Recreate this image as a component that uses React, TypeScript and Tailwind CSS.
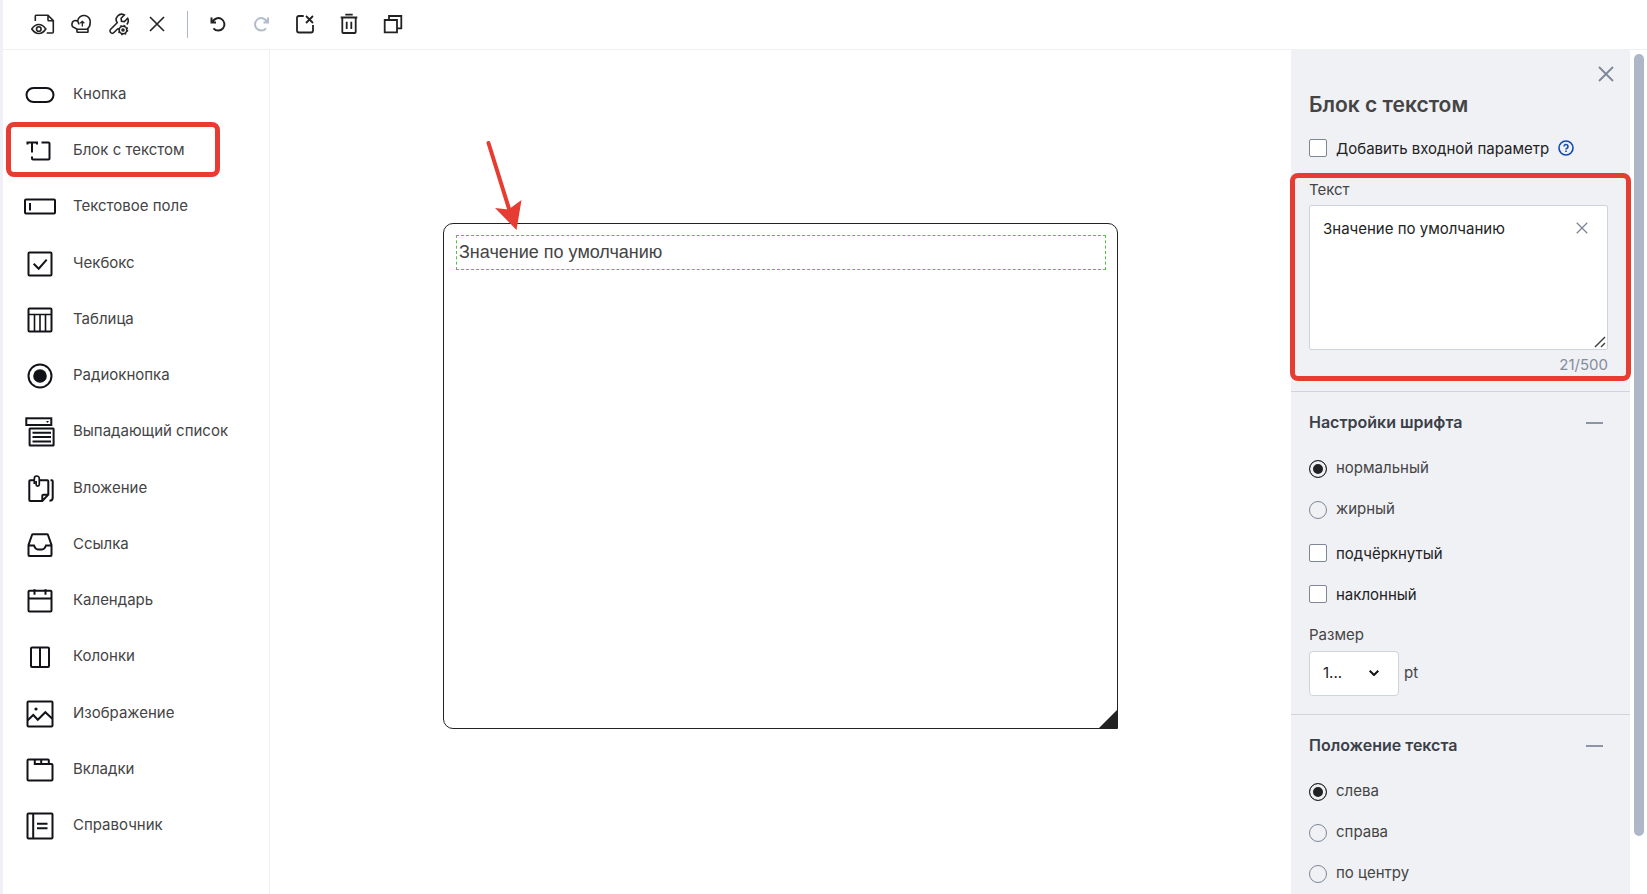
import { useState, type ReactNode } from 'react';

interface PaletteItem {
  label: string;
  icon: ReactNode;
  selected?: boolean;
}

const paletteGroups: PaletteItem[][] = [
  [
    { label: 'Кнопка', icon: <rect x="2.5" y="9" width="27" height="14" rx="7" /> },
    {
      label: 'Блок с текстом',
      selected: true,
      icon: <path d="M3.500 9.500V7.500h9.500v2M8 7.500v10M8 21.500v2q0 1 1 1h15.500q1 0 1-1v-15q0-1-1-1H17.500" />,
    },
    {
      label: 'Текстовое поле',
      icon: (
        <>
          <rect x="1" y="8.5" width="30" height="14" rx="1" />
          <path d="M6 12v7.500" />
        </>
      ),
    },
  ],
  [
    {
      label: 'Чекбокс',
      icon: (
        <>
          <rect x="4.5" y="4.5" width="23" height="23" rx="1" />
          <path d="m9.700 15.700 5 5 8-9" />
        </>
      ),
    },
    {
      label: 'Таблица',
      icon: (
        <>
          <rect x="4.5" y="4.5" width="23" height="23" rx="1" />
          <path d="M4.5 10.5h23M10.5 10.5v17M16 10.5v17M21.5 10.5v17" strokeWidth="1.6" />
        </>
      ),
    },
    {
      label: 'Радиокнопка',
      icon: (
        <>
          <circle cx="16" cy="16" r="11.5" />
          <circle cx="16" cy="16" r="6.8" fill="currentColor" stroke="none" />
        </>
      ),
    },
    {
      label: 'Выпадающий список',
      icon: (
        <>
          <rect x="2.3" y="2.3" width="25" height="6.7" />
          <path d="M22 5h3l-1.5 2z" fill="currentColor" stroke="none" />
          <rect x="5.6" y="12.6" width="24" height="17" rx=".5" />
          <path d="M8.500 16.800h18.500M8.500 21.100h18.500M8.500 25.400h18.500" />
        </>
      ),
    },
  ],
  [
    {
      label: 'Вложение',
      icon: (
        <>
          <path d="M10 7.300H6.300q-1 0-1 1V27q0 1 1 1h12l6-6.300V8.300q0-1-1-1H15.500M18.300 28v-5.300q0-1 1-1h5.400" />
          <path d="M10.300 11V5.500a2.500 2.500 0 0 1 5 0v6a1.600 1.600 0 0 1-3.200 0V8" strokeWidth="1.7" />
          <path d="M26.500 7.300h1.200q1 0 1 1V25q0 2.500-3.200 2.800" />
        </>
      ),
    },
    {
      label: 'Ссылка',
      icon: (
        <path d="M9 5.300h14q.7 0 1 .7l3.500 10v10q0 1-1 1h-21q-1 0-1-1V16L8 6q.3-.7 1-.7ZM4.500 16.500H10q1.500 4 4 4h4q2.500 0 4-4h5.500" />
      ),
    },
    {
      label: 'Календарь',
      icon: (
        <>
          <rect x="4.5" y="5.7" width="23" height="20.8" rx="1" />
          <path d="M4.5 13.5h23M10.5 4.200v5.500M21.500 4.200v5.500" />
        </>
      ),
    },
    {
      label: 'Колонки',
      icon: (
        <>
          <rect x="7" y="6.5" width="18" height="19.5" rx="1" />
          <path d="M16 6.500v19.500" />
        </>
      ),
    },
  ],
  [
    {
      label: 'Изображение',
      icon: (
        <>
          <rect x="3.5" y="3.5" width="25" height="25" rx="1" />
          <circle cx="12" cy="11" r="1.6" fill="currentColor" stroke="none" />
          <path d="M3.700 22.300 9.300 17l4.500 4.700 7.500-7.500 7 6.500" />
        </>
      ),
    },
    {
      label: 'Вкладки',
      icon: (
        <>
          <path d="M4.500 5.500H24q.8 0 .8.800v3.700h2.700q1 0 1 1v14.500q0 1-1 1h-23q-1 0-1-1v-19q0-1 1-1Z" />
          <path d="M10.800 5.500V10h14M17.200 5.500V10" />
        </>
      ),
    },
    {
      label: 'Справочник',
      icon: (
        <>
          <rect x="3.5" y="3.5" width="25" height="25" rx="1" />
          <path d="M9.200 3.500v25M13 13.700h10.500M13 18.200h10.500" />
        </>
      ),
    },
  ],
];

const fileTools = [
  {
    label: 'Предпросмотр',
    icon: (
      <>
        <path d="M4.300 9V4q0-.7.700-.7h12l5.300 5.400V20q0 1-1 1h-5.600M17 3.300V8q0 .7.700.7h4.600" />
        <path d="M.8 17q3-4.500 7-4.500t7 4.500q-3 4.500-7 4.500T.8 17Z" />
        <circle cx="7.8" cy="17" r="2.3" />
      </>
    ),
  },
  {
    label: 'Опубликовать',
    icon: (
      <>
        <path d="M9.800 12.500A3.800 3.800 0 0 0 7 8.600a3.700 3.700 0 0 0-1.500 7.200q1.800.8 2.700 2M8.700 8.800a6.300 6.300 0 0 1 12.500 2q0 4-3 6.400" />
        <rect x="8" y="17.3" width="11" height="3" rx=".5" />
        <path d="M13.300 14.500V9.700M11.300 11.300l2-2 2 2" strokeWidth="1.3" />
      </>
    ),
  },
  {
    label: 'Настройки',
    icon: (
      <>
        <path d="M11 16.500l-4 4a2.300 2.300 0 0 1-3.300-3.300l6.500-6.500a5.400 5.400 0 0 1 7.200-7.700l-3.300 3.300.4 2.900 2.900.4 3.300-3.300q1.600 3.300-.9 6.200" />
        <circle cx="16" cy="18" r="3.8" />
        <circle cx="16" cy="18" r="1" />
        <circle cx="16" cy="18" r="4.7" strokeWidth="1.2" strokeDasharray="1.7 2" />
      </>
    ),
  },
  { label: 'Закрыть редактор', icon: <path d="m5 5 14 14M19 5 5 19" /> },
];

const editTools = [
  { label: 'Отменить', icon: <path d="M6.500 5.500v5H11M7.500 10A6.200 6.200 0 1 1 8.500 16.300" strokeWidth="2" /> },
  {
    label: 'Повторить',
    disabled: true,
    icon: <path d="M19 5.500v5h-4.500M18 10A6.200 6.200 0 1 0 17 16.300" strokeWidth="2" />,
  },
  {
    label: 'Очистить',
    icon: <path d="M10.700 4H6Q4 4 4 6v12.500q0 2 2 2h12q2 0 2-2V13M13 4l7 7M20 4l-7 7" strokeWidth="1.8" />,
  },
  {
    label: 'Удалить',
    icon: (
      <path d="M3.700 5.500h16.600M8.300 2.700h7.400M5.300 5.500V20q0 1 1 1h11.400q1 0 1-1V5.500M9.700 9.700V17M14.300 9.700V17" strokeWidth="1.8" />
    ),
  },
  { label: 'Дублировать', icon: <path d="M3.700 8H16v12.300H3.700ZM8 8V4h12.300v12.300H16" strokeWidth="1.8" /> },
];

function CrossIcon({ className }: { className: string }) {
  return (
    <svg viewBox="0 0 16 16" className={className} fill="none" stroke="currentColor" strokeWidth="1.8" aria-hidden="true">
      <path d="m1 1 14 14M15 1 1 15" />
    </svg>
  );
}

function ToolButton({ label, icon, disabled, className }: { label: string; icon: ReactNode; disabled?: boolean; className: string }) {
  return (
    <button type="button" aria-label={label} disabled={disabled} className={className}>
      <svg viewBox="0 0 24 24" className="size-6" fill="none" stroke="currentColor" strokeWidth="1.6" aria-hidden="true">
        {icon}
      </svg>
    </button>
  );
}

function Toolbar() {
  return (
    <header className="flex h-[50px] shrink-0 items-center border-b border-[#eff0f2] pb-px pl-[21px] text-[#222]">
      {fileTools.map((tool) => (
        <ToolButton key={tool.label} {...tool} className="flex w-[38px] justify-center" />
      ))}
      <div className="mr-[7px] ml-[11px] h-[27px] w-px bg-[#aeb7c7]" />
      {editTools.map((tool) => (
        <ToolButton key={tool.label} {...tool} className="flex w-11 justify-center disabled:text-[#b3bccb]" />
      ))}
    </header>
  );
}

function Palette() {
  return (
    <nav className="flex w-[267px] shrink-0 flex-col gap-px border-r border-[#eff0f2] pt-[17px]">
      {paletteGroups.map((group, index) => (
        <div key={index}>
          {group.map((item) => (
            <button key={item.label} type="button" className="relative flex h-14 w-full items-center gap-[17px] pl-[21px] text-left">
              <svg viewBox="0 0 32 32" className="size-8 text-[#121318]" fill="none" stroke="currentColor" strokeWidth="2" aria-hidden="true">
                {item.icon}
              </svg>
              <span className="pb-[2px]">{item.label}</span>
              {item.selected && (
                <span className="absolute -top-px left-[3px] h-[55px] w-[214px] rounded-lg border-5 border-[#e63c32]" />
              )}
            </button>
          ))}
        </div>
      ))}
    </nav>
  );
}

function Canvas({ text }: { text: string }) {
  return (
    <main className="flex min-w-0 flex-1 items-start justify-center pt-[173px]">
      <div className="relative h-[506px] w-[675px] rounded-[10px] rounded-br-none border border-[#222] py-[11px] pr-[11px] pl-3">
        <p className="h-[35px] border border-dashed border-[#52c041] px-[2px] font-[Liberation_Sans,sans-serif] text-lg leading-8">
          {text}
        </p>
        {/* Resize corner */}
        <svg viewBox="0 0 18 18" className="absolute right-0 bottom-0 size-[18px]" aria-hidden="true">
          <path d="M18 0v18H0z" fill="#222" />
        </svg>
        {/* Pointer to the edited block */}
        <svg viewBox="0 0 48 100" className="absolute -top-[84px] left-9 h-[100px] w-12" aria-hidden="true">
          <path d="M8.500 3 30 72" stroke="#e63c32" strokeWidth="4" strokeLinecap="round" />
          <path d="m15 68 13.500 1.500L41.500 60l-5 30z" fill="#e63c32" />
        </svg>
      </div>
    </main>
  );
}

function CheckOption({ label, children }: { label: string; children?: ReactNode }) {
  return (
    <div className="flex h-[18px] items-center">
      <label className="flex items-center gap-[9px] text-[#222]">
        <input type="checkbox" className="size-[18px] appearance-none rounded-xs border border-[#7d8798] bg-white checked:bg-[#222]" />
        <span className="pt-[2px]">{label}</span>
      </label>
      {children}
    </div>
  );
}

function RadioOption({ name, label, defaultChecked }: { name: string; label: string; defaultChecked?: boolean }) {
  return (
    <label className="flex h-[18px] items-center gap-[9px]">
      <input
        type="radio"
        name={name}
        defaultChecked={defaultChecked}
        className="size-[18px] appearance-none rounded-full border border-[#7d8798] checked:border-[#222] checked:bg-[#222] checked:shadow-[inset_0_0_0_3px_#f0f1f5]"
      />
      <span className="pb-[2px]">{label}</span>
    </label>
  );
}

function Section({ title, children }: { title: string; children: ReactNode }) {
  return (
    <section className="border-t border-[#ced3de] px-[18px] py-[18px]">
      <button type="button" className="flex h-6 w-full items-center justify-between pr-[9px] text-base font-semibold text-[#3b3f48]">
        {title}
        <span className="mt-px h-[2px] w-[17px] bg-[#8b95a4]" />
      </button>
      {children}
    </section>
  );
}

function SettingsPanel({ text, onChange }: { text: string; onChange: (value: string) => void }) {
  return (
    <aside className="flex w-[356px] shrink-0 gap-1">
      <div className="w-[339px] bg-[#f0f1f5]">
        <div className="flex justify-end pt-4 pr-4 text-[#7d8798]">
          <button type="button" aria-label="Закрыть панель">
            <CrossIcon className="size-4" />
          </button>
        </div>
        <h2 className="mt-[11px] px-[18px] text-[21px] leading-6 font-semibold">Блок с текстом</h2>
        <div className="mt-[22px] px-[18px]">
          <CheckOption label="Добавить входной параметр">
            <button type="button" aria-label="Справка" className="ml-[9px] text-[#1048b8]">
              <svg viewBox="0 0 16 16" className="size-4" fill="none" stroke="currentColor" strokeWidth="1.6" aria-hidden="true">
                <circle cx="8" cy="8" r="7" />
                <path d="M6 6.500a2 2 0 1 1 3 1.700q-1 .5-1 1.300M8 10.500v1.500" />
              </svg>
            </button>
          </CheckOption>
        </div>
        {/* Text value */}
        <div className="relative mt-4 h-[208px] px-[18px] pt-[5px]">
          <div className="pointer-events-none absolute inset-y-0 -inset-x-px rounded-lg border-5 border-[#e63c32]" />
          <label htmlFor="block-text" className="block h-[27px] leading-6">Текст</label>
          <div className="relative mr-1">
            <textarea
              id="block-text"
              value={text}
              maxLength={500}
              onChange={(event) => onChange(event.target.value)}
              className="block h-[145px] w-full resize-none rounded-xs border border-[#ced3de] bg-white py-[11px] pr-10 pl-[13px] leading-6 text-[#222]"
            />
            <button type="button" aria-label="Очистить текст" className="absolute top-[17px] right-5 text-[#7d8798]">
              <CrossIcon className="size-3" />
            </button>
            <svg viewBox="0 0 12 12" className="absolute right-[2px] bottom-[2px] size-3" stroke="#444" strokeWidth="1.5" aria-hidden="true">
              <path d="M1 11 11 1M7 11l4-4" />
            </svg>
          </div>
          <p className="mr-1 pt-[3px] text-right leading-6 text-[#858c9b]">{text.length}/500</p>
        </div>
        <div className="h-[10px]" />
        <Section title="Настройки шрифта">
          <div className="flex flex-col gap-[23px] pt-[26px]">
            <RadioOption name="weight" label="нормальный" defaultChecked />
            <RadioOption name="weight" label="жирный" />
          </div>
          <div className="flex flex-col gap-[23px] pt-[25px]">
            <CheckOption label="подчёркнутый" />
            <CheckOption label="наклонный" />
          </div>
          <label htmlFor="font-size" className="mt-5 block h-7 leading-6">Размер</label>
          <div className="flex items-center gap-[5px]">
            <div className="relative">
              <select id="font-size" className="h-[45px] w-[90px] appearance-none rounded-sm border border-[#ced3de] bg-white pl-[13px] text-[#222]">
                <option>1...</option>
              </select>
              <svg viewBox="0 0 10 6" className="pointer-events-none absolute top-[19px] right-5 h-[6px] w-[10px]" fill="none" stroke="#121318" strokeWidth="2" aria-hidden="true">
                <path d="m.7.700 4.300 4.300L9.300.7" />
              </svg>
            </div>
            pt
          </div>
        </Section>
        <Section title="Положение текста">
          <div className="flex flex-col gap-[23px] pt-[26px]">
            <RadioOption name="align" label="слева" defaultChecked />
            <RadioOption name="align" label="справа" />
            <RadioOption name="align" label="по центру" />
          </div>
        </Section>
      </div>
      {/* Scroll thumb */}
      <div className="mt-1 mb-[58px] w-[10px] rounded-full bg-[#aeb7c7]" />
    </aside>
  );
}

export default function App() {
  const [text, setText] = useState('Значение по умолчанию');

  return (
    <div className="flex h-screen flex-col overflow-hidden border-l-3 border-[#eff1f6] bg-white font-[Inter,sans-serif] text-[15px] text-[#444]">
      <Toolbar />
      <div className="flex min-h-0 flex-1">
        <Palette />
        <Canvas text={text} />
        <SettingsPanel text={text} onChange={setText} />
      </div>
    </div>
  );
}
